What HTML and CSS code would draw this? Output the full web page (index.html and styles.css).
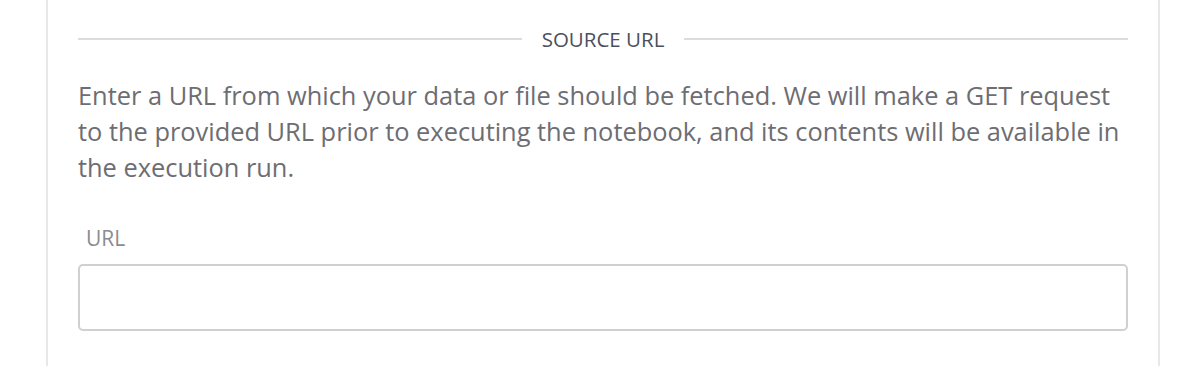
FILE: index.html
```html
<!DOCTYPE html>
<html lang="en">
<head>
<meta charset="utf-8">
<title>Source URL</title>
<link rel="stylesheet" href="styles.css">
</head>
<body>
<div class="page">
  <section class="card">
    <div class="divider">
      <span class="divider-line"></span>
      <h2 class="divider-title">SOURCE URL</h2>
      <span class="divider-line"></span>
    </div>
    <p class="description">Enter a URL from which your data or file should be fetched. We will make a GET request to the provided URL prior to executing the notebook, and its contents will be available in the execution run.</p>
    <label class="field-label" for="url">URL</label>
    <input class="field-input" id="url" type="text">
  </section>
</div>
</body>
</html>
```

FILE: styles.css
```css
html, body {
  margin: 0;
  padding: 0;
  background: #ffffff;
  height: 100%;
  overflow: hidden;
}

.page {
  padding-left: 46px;
  height: 100%;
}

.card {
  box-sizing: border-box;
  width: 1114px;
  min-height: 100%;
  border-left: 2px solid #e8e8e8;
  border-right: 2px solid #e8e8e8;
  padding: 21px 30px 0 30px;
  display: flex;
  flex-direction: column;
  font-family: "Open Sans", "Noto Sans", sans-serif;
}

.divider {
  display: flex;
  align-items: center;
  gap: 20px;
  height: 36px;
}

.divider-line {
  flex: 1;
  height: 2px;
  background: #dcdcdc;
}

.divider-title {
  margin: 0;
  font-size: 20.5px;
  line-height: 36px;
  font-weight: 400;
  color: #4b505c;
}

.description {
  margin: 20px 0 0 0;
  font-size: 25.4px;
  line-height: 36px;
  color: #6d6d72;
}

.field-label {
  margin-top: 35px;
  padding-left: 8px;
  font-size: 21px;
  line-height: 36px;
  color: #8c8c90;
}

.field-input {
  box-sizing: border-box;
  margin-top: 8px;
  width: 100%;
  height: 67px;
  border: 2px solid #d0d0d0;
  border-radius: 5px;
  background: #fff;
  outline: none;
  font-family: inherit;
  font-size: 20px;
}
```
